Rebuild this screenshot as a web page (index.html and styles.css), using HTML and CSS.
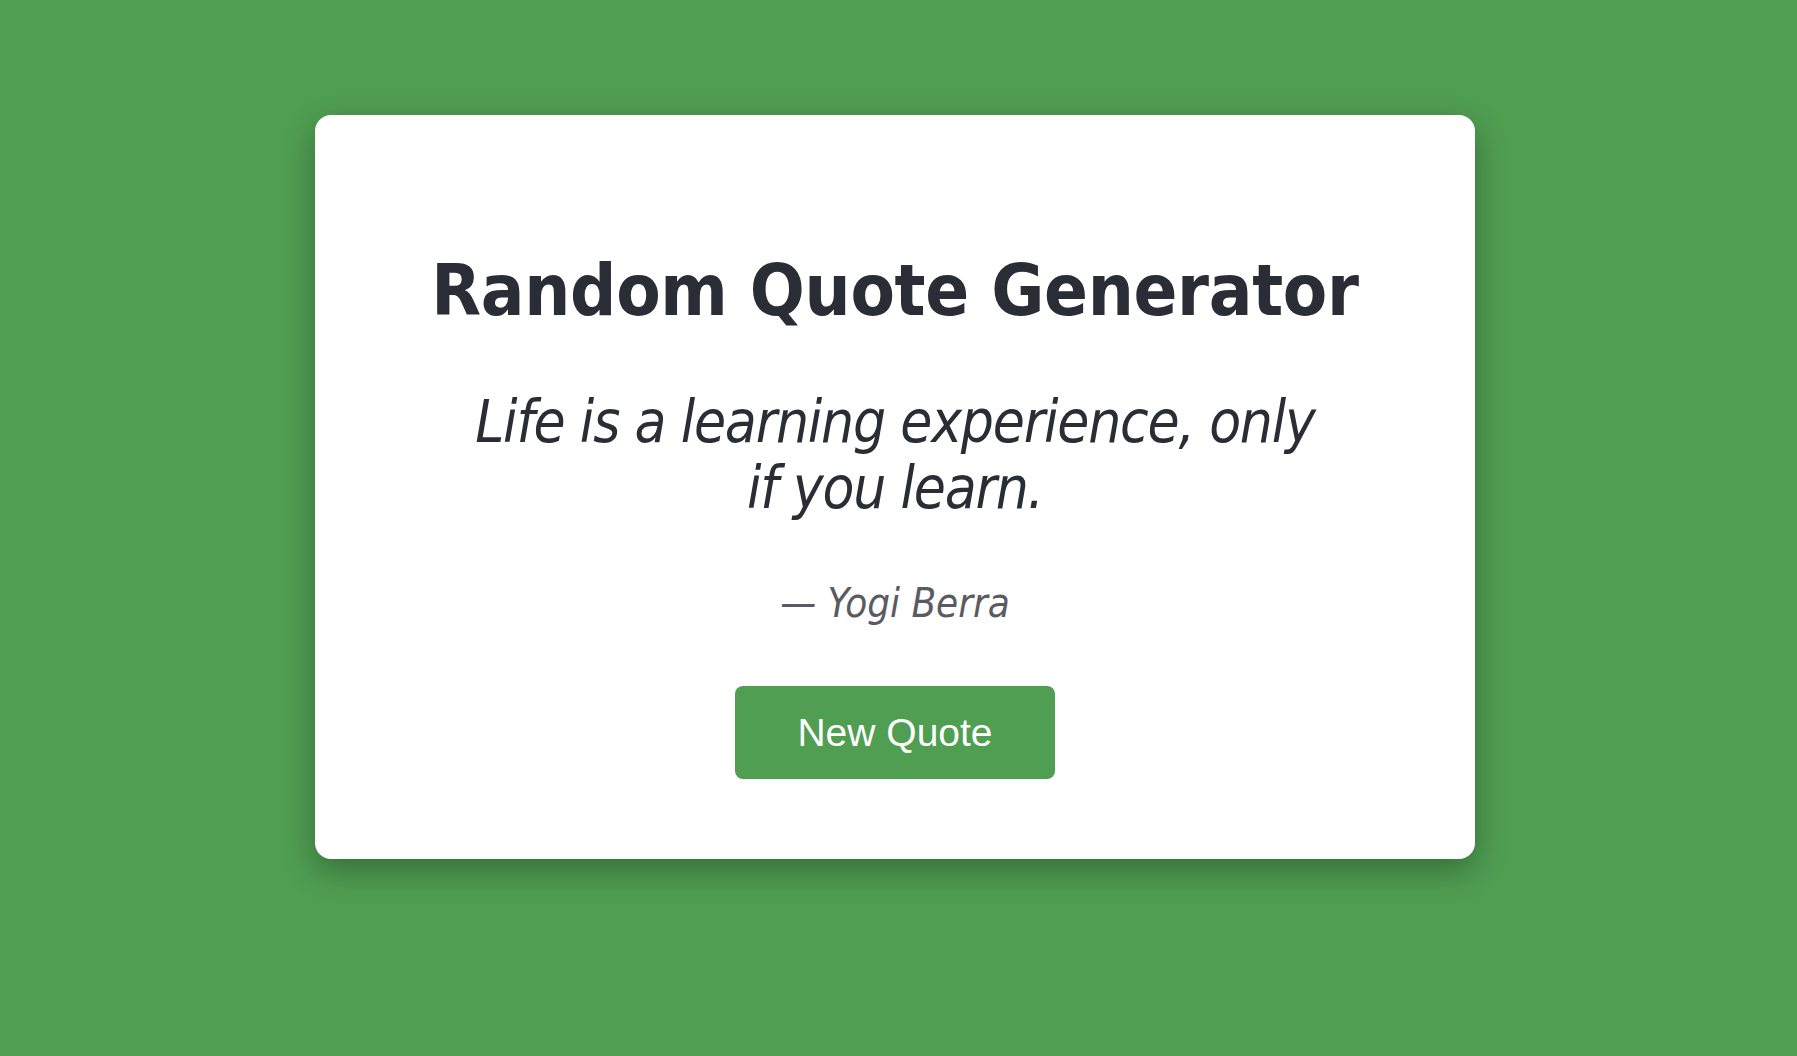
FILE: index.html
```html
<!DOCTYPE html>
<html lang="en">
<head>
<meta charset="utf-8">
<title>Random Quote Generator</title>
<link rel="stylesheet" href="styles.css">
</head>
<body>
  <main class="card">
    <h1 class="title">Random Quote Generator</h1>
    <p class="quote">Life is a learning experience, only if you learn.</p>
    <p class="author">— Yogi Berra</p>
    <button class="btn" type="button">New Quote</button>
  </main>
</body>
</html>
```

FILE: styles.css
```css
html, body {
  margin: 0;
  padding: 0;
}

body {
  background: #4f9e52;
  min-height: 100vh;
  font-family: Tahoma, "DejaVu Sans Condensed", "DejaVu Sans", sans-serif;
  color: #2a2d35;
}

.card {
  box-sizing: border-box;
  width: 1160px;
  margin: 115px 0 0 315px;
  padding: 132px 60px 80px;
  background: #ffffff;
  border-radius: 16px;
  box-shadow: 0 12px 32px rgba(0, 0, 0, 0.3);
  display: flex;
  flex-direction: column;
  align-items: center;
  text-align: center;
}

.title {
  margin: 0;
  font-size: 72px;
  line-height: 86px;
  font-weight: bold;
  letter-spacing: -0.3px;
  color: #2a2d35;
}

.quote {
  margin: 56px 0 0;
  max-width: 850px;
  font-size: 58px;
  line-height: 66px;
  font-style: italic;
  letter-spacing: -1.2px;
  color: #2a2d35;
}

.author {
  margin: 58px 0 0;
  font-size: 40px;
  line-height: 48px;
  font-style: italic;
  color: #5a5b62;
}

.btn {
  margin-top: 59px;
  padding: 24px 62px;
  border: none;
  border-radius: 8px;
  background: #4f9e52;
  color: #ffffff;
  font-family: "Liberation Sans", Arial, sans-serif;
  font-size: 39px;
  line-height: 45px;
  cursor: pointer;
}
```
